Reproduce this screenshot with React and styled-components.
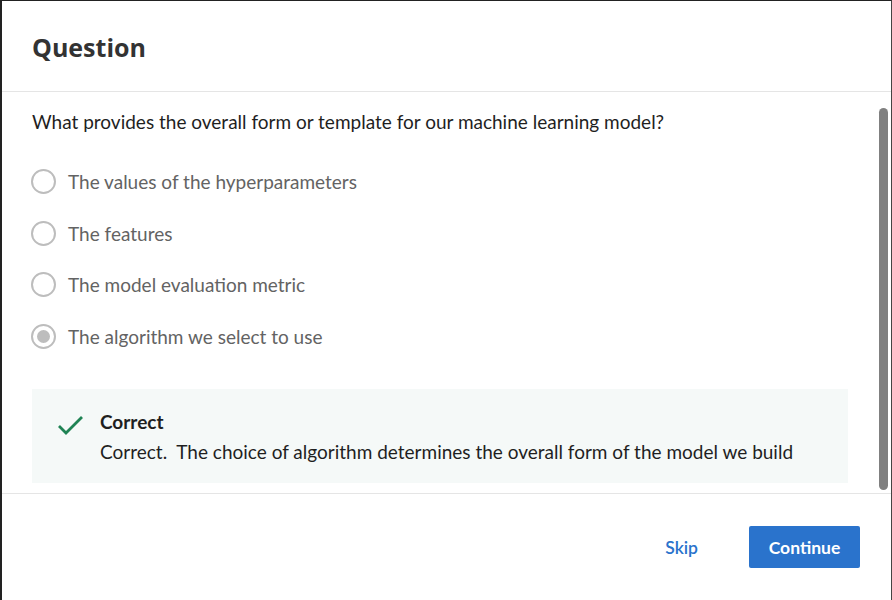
import React from "react";
import styled, { createGlobalStyle } from "styled-components";

const GlobalStyle = createGlobalStyle`
  html, body {
    margin: 0;
    padding: 0;
    background: #ffffff;
  }
  * {
    box-sizing: border-box;
  }
`;

const colors = {
  text: "#1f1f1f",
  muted: "#636363",
  line: "#e5e5e5",
  blue: "#2a73cc",
  green: "#1f8354",
  radio: "#bdbdbd",
};

const Modal = styled.div`
  width: 892px;
  height: 600px;
  display: flex;
  flex-direction: column;
  border-top: 1px solid #222;
  border-left: 2px solid #222;
  border-right: 1px solid #444;
  background: #fff;
  font-family: Lato, "Liberation Sans", sans-serif;
  position: relative;
`;

const Header = styled.div`
  height: 91px;
  padding: 31px 30px 0;
  border-bottom: 1px solid ${colors.line};
`;

const Title = styled.h2`
  margin: 0;
  font-family: "Open Sans", sans-serif;
  font-weight: 700;
  font-size: 25px;
  line-height: 30px;
  color: #333;
`;

const Body = styled.div`
  height: 402px;
  padding: 18px 29px 0;
  border-bottom: 1px solid ${colors.line};
  position: relative;
`;

const Prompt = styled.p`
  margin: 0 0 22px 1px;
  font-size: 19px;
  line-height: 24px;
  color: ${colors.text};
`;

const OptionList = styled.div`
  display: flex;
  flex-direction: column;
`;

const Option = styled.label`
  display: flex;
  align-items: center;
  gap: 12px;
  height: 51.5px;
  font-size: 19px;
  color: ${colors.muted};
`;

const Radio = styled.span`
  width: 25px;
  height: 25px;
  border-radius: 50%;
  border: 2px solid ${colors.radio};
  display: flex;
  align-items: center;
  justify-content: center;
  flex-shrink: 0;
  &::after {
    content: "";
    width: 13px;
    height: 13px;
    border-radius: 50%;
    background: ${(p) => (p.$checked ? colors.radio : "transparent")};
  }
`;

const Feedback = styled.div`
  margin: 27px 14px 0 1px;
  background: #f5f9f8;
  display: flex;
  gap: 14px;
  padding: 21px 26px 20px;
  height: 94px;
`;

const FeedbackText = styled.div`
  display: flex;
  flex-direction: column;
  gap: 6px;
  font-size: 19px;
  color: ${colors.text};
`;

const FeedbackTitle = styled.strong`
  font-weight: 700;
  line-height: 24px;
`;

const FeedbackBody = styled.span`
  line-height: 24px;
`;

const ScrollThumb = styled.div`
  position: absolute;
  right: 3px;
  top: 16px;
  width: 9px;
  height: 382px;
  border-radius: 5px;
  background: #808080;
`;

const Footer = styled.div`
  flex: 1;
  display: flex;
  justify-content: flex-end;
  align-items: center;
  gap: 51px;
  padding: 0 31px 0;
`;

const TextButton = styled.button`
  background: none;
  border: none;
  padding: 0;
  font-family: Lato, sans-serif;
  font-size: 17.5px;
  font-weight: 600;
  color: ${colors.blue};
`;

const PrimaryButton = styled.button`
  width: 111px;
  height: 42px;
  background: ${colors.blue};
  border: none;
  border-radius: 2px;
  color: #fff;
  font-family: Lato, sans-serif;
  font-size: 17.5px;
  font-weight: 700;
`;

const options = [
  "The values of the hyperparameters",
  "The features",
  "The model evaluation metric",
  "The algorithm we select to use",
];

const CheckIcon = () => (
  <svg width="30" height="24" viewBox="0 0 30 24" style={{ marginTop: 3, marginLeft: -2 }}>
    <path d="M3 13 L10 20 L26 4" fill="none" stroke={colors.green} strokeWidth="2.8" />
  </svg>
);

export default function App() {
  return (
    <>
      <GlobalStyle />
      <Modal>
        <Header>
          <Title>Question</Title>
        </Header>
        <Body>
          <Prompt>What provides the overall form or template for our machine learning model?</Prompt>
          <OptionList>
            {options.map((o, i) => (
              <Option key={o}>
                <Radio $checked={i === 3} />
                {o}
              </Option>
            ))}
          </OptionList>
          <Feedback>
            <CheckIcon />
            <FeedbackText>
              <FeedbackTitle>Correct</FeedbackTitle>
              <FeedbackBody>Correct.&nbsp; The choice of algorithm determines the overall form of the model we build</FeedbackBody>
            </FeedbackText>
          </Feedback>
          <ScrollThumb />
        </Body>
        <Footer>
          <TextButton>Skip</TextButton>
          <PrimaryButton>Continue</PrimaryButton>
        </Footer>
      </Modal>
    </>
  );
}
